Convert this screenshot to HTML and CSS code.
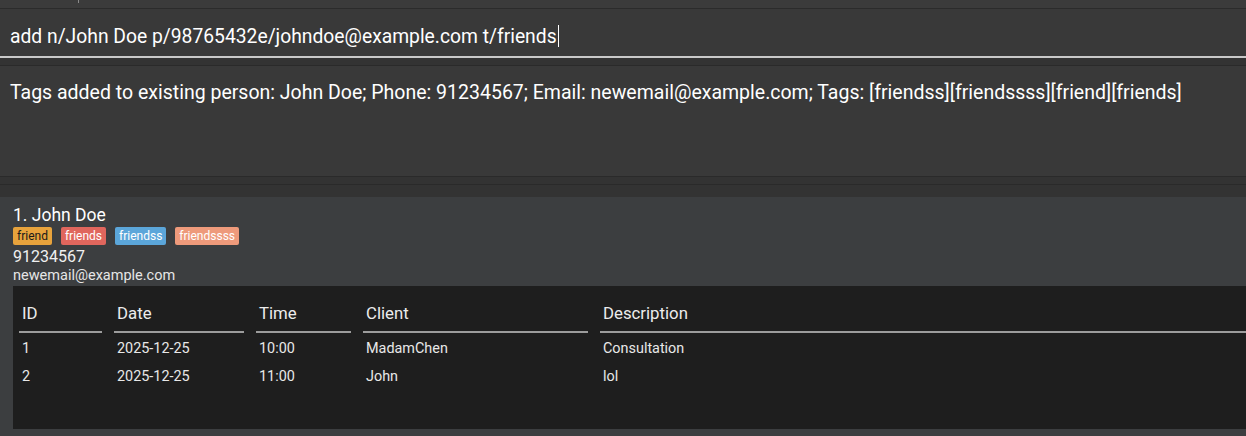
FILE: index.html
```html
<!DOCTYPE html>
<html>
<head>
<meta charset="utf-8">
<link rel="stylesheet" href="styles.css">
</head>
<body>
<div class="app">
  <div class="menu-strip"><span class="menu-tick"></span></div>
  <div class="command-box">
    <span class="command-text">add n/John Doe p/98765432e/johndoe@example.com t/friends</span><span class="caret"></span>
  </div>
  <div class="gap gap-a"></div>
  <div class="result-box">Tags added to existing person: John Doe; Phone: 91234567; Email: newemail@example.com; Tags: [friendss][friendssss][friend][friends]</div>
  <div class="gap gap-b"></div>
  <div class="gap gap-c"></div>
  <div class="card">
    <div class="name">1. John Doe</div>
    <div class="tags">
      <span class="tag tag-friend">friend</span>
      <span class="tag tag-friends">friends</span>
      <span class="tag tag-friendss">friendss</span>
      <span class="tag tag-friendssss">friendssss</span>
    </div>
    <div class="phone">91234567</div>
    <div class="email">newemail@example.com</div>
    <div class="table">
      <div class="th"><span>ID</span></div>
      <div class="th"><span>Date</span></div>
      <div class="th"><span>Time</span></div>
      <div class="th"><span>Client</span></div>
      <div class="th th-last"><span>Description</span></div>
      <div class="td">1</div>
      <div class="td">2025-12-25</div>
      <div class="td">10:00</div>
      <div class="td">MadamChen</div>
      <div class="td">Consultation</div>
      <div class="td">2</div>
      <div class="td">2025-12-25</div>
      <div class="td">11:00</div>
      <div class="td">John</div>
      <div class="td">lol</div>
    </div>
  </div>
</div>
</body>
</html>
```

FILE: styles.css
```css
* { box-sizing: border-box; }
html, body { margin: 0; padding: 0; }
body {
  background: #333333;
  font-family: Roboto, "Liberation Sans", sans-serif;
  color: #ffffff;
  overflow: hidden;
}
.app { width: 1246px; height: 436px; overflow: hidden; }
.menu-strip {
  height: 9px;
  background: #3b3b3b;
  border-bottom: 1px solid #2b2b2b;
  padding-left: 78px;
}
.menu-tick {
  display: block;
  width: 1px;
  height: 3px;
  background: #8a8a8a;
}
.command-box {
  height: 49px;
  background: #393939;
  border-bottom: 2px solid #c9c9c9;
  padding: 7px 0 0 10px;
  display: flex;
  align-items: center;
  font-size: 19.3px;
}
.caret {
  display: inline-block;
  width: 1px;
  height: 22px;
  background: #ffffff;
  margin-left: 1px;
}
.gap { background: #333333; }
.gap-a { height: 8px; border-bottom: 1px solid #2a2a2a; }
.result-box {
  height: 111px;
  background: #393939;
  border-bottom: 1px solid #2a2a2a;
  padding: 15px 10px 0 10px;
  font-size: 19.5px;
  line-height: 24px;
}
.gap-b { height: 8px; border-bottom: 1px solid #2a2a2a; }
.gap-c { height: 12px; }
.card {
  background: #3c3e40;
  padding: 8px 0 0 13px;
  height: 250px;
}
.name { font-size: 17.5px; line-height: 20px; }
.tags { display: flex; gap: 9px; margin-top: 2px; height: 19px; }
.tag {
  font-size: 12px;
  line-height: 18px;
  height: 18px;
  padding: 0 4px;
  border-radius: 2px;
  color: #ffffff;
}
.tag-friend { background: #e8a33c; color: #1a1a1a; }
.tag-friends { background: #e0665d; }
.tag-friendss { background: #5ba6da; }
.tag-friendssss { background: #ee9a7b; }
.phone { font-size: 16px; line-height: 19px; margin-top: 1px; color: #f0f0f0; }
.email { font-size: 14.5px; line-height: 19px; color: #e6e6e6; }
.table {
  margin-top: 1px;
  background: #1e1e1e;
  height: 143px;
  display: grid;
  grid-template-columns: 95px 142px 107px 237px 1fr;
  grid-auto-rows: 28px;
  grid-template-rows: 47px;
  align-content: start;
}
.th {
  padding: 0 6px;
  display: flex;
}
.th span {
  flex: 1;
  border-bottom: 2px solid #9c9c9c;
  padding: 17px 3px 8px 3px;
  font-size: 16.8px;
  line-height: 20px;
  color: #ececec;
}
.th-last { padding-right: 0; }
.td {
  padding: 2px 0 0 9px;
  font-size: 14.4px;
  line-height: 28px;
  color: #e8e8e8;
}
```
